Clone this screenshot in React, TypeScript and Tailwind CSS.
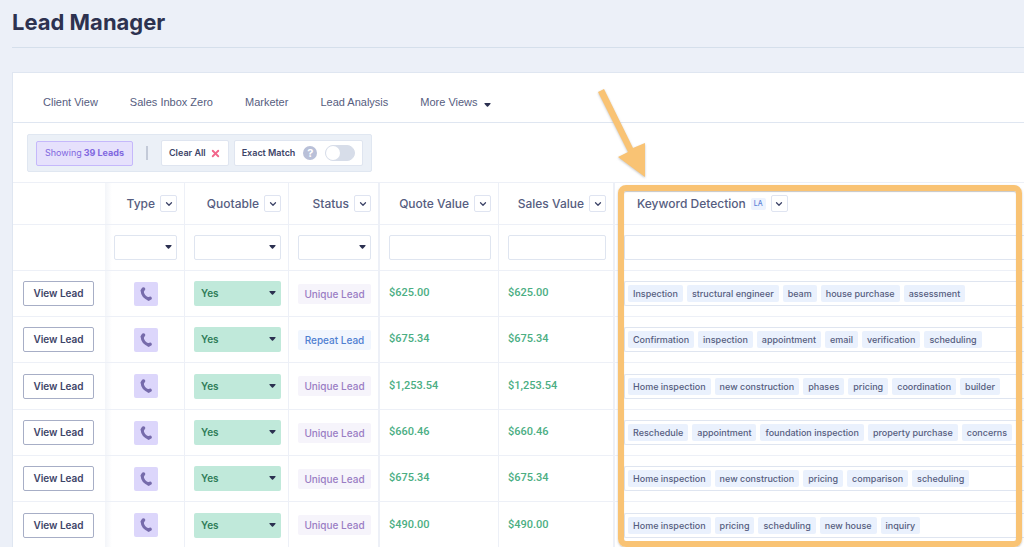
import { useState } from "react";
import { ChevronDown, X } from "lucide-react";

type Lead = {
  status: "Unique Lead" | "Repeat Lead";
  value: string;
  keywords: string[];
};

const views = ["Client View", "Sales Inbox Zero", "Marketer", "Lead Analysis"];

const fade = "bg-[linear-gradient(to_right,#f3f5f9,#fff_7px)]";

const columns = [
  { name: "Type", style: `w-[80px] border-r ${fade}`, select: true },
  { name: "Quotable", style: "w-[104px] border-r", select: true },
  { name: "Status", style: "w-[91px] border-r-2", select: true },
  { name: "Quote Value", style: "w-[119px] border-r", select: false },
  { name: "Sales Value", style: "w-[116px] border-r-2", select: false },
];

const leads: Lead[] = [
  { status: "Unique Lead", value: "$625.00", keywords: ["Inspection", "structural engineer", "beam", "house purchase", "assessment"] },
  { status: "Repeat Lead", value: "$675.34", keywords: ["Confirmation", "inspection", "appointment", "email", "verification", "scheduling"] },
  { status: "Unique Lead", value: "$1,253.54", keywords: ["Home inspection", "new construction", "phases", "pricing", "coordination", "builder"] },
  { status: "Unique Lead", value: "$660.46", keywords: ["Reschedule", "appointment", "foundation inspection", "property purchase", "concerns"] },
  { status: "Unique Lead", value: "$675.34", keywords: ["Home inspection", "new construction", "pricing", "comparison", "scheduling"] },
  { status: "Unique Lead", value: "$490.00", keywords: ["Home inspection", "pricing", "scheduling", "new house", "inquiry"] },
];

const line = "border-t border-[#edf0f7]";
const cell = `${line} pr-[7px] pl-[9px]`;

const Caret = ({ className }: { className: string }) => (
  <svg viewBox="0 0 7 4" className={`h-1 w-[7px] ${className}`} fill="#2b3050">
    <path d="M0.9 0 H6.1 Q7 0.2 6.4 1 L4.1 3.6 Q3.5 4.1 2.9 3.6 L0.6 1 Q0 0.2 0.9 0 Z" />
  </svg>
);

const SelectCaret = () => <Caret className="pointer-events-none absolute top-[10px] right-[5px]" />;

const SortButton = ({ name }: { name: string }) => (
  <button aria-label={`${name} options`} className="flex size-[17px] shrink-0 items-center justify-center rounded-xs border border-[#dfe4f1]">
    <ChevronDown size={10} strokeWidth={3} className="text-[#3d4468]" />
  </button>
);

const Phone = () => (
  <svg viewBox="0 0 12 14" className="h-[14px] w-3" fill="none" stroke="#766bab" strokeLinecap="round">
    <path d="M2.2 4 Q2.4 9.4 8.6 12" strokeWidth="3" />
    <path d="M2.5 3.4 L3.4 2.1" strokeWidth="3.6" />
    <path d="M8.6 11.9 L10.1 11.2" strokeWidth="3.4" />
  </svg>
);

const App = () => {
  const [exact, setExact] = useState(false);

  return (
    <div className="h-screen overflow-hidden bg-[#ecf0f8] pl-3 font-['Inter',sans-serif] text-[#565d80]">
      <header className="border-b border-[#d5dfeb] pt-1 pb-[7px]">
        <h1 className="text-[22px] leading-9 font-bold text-[#2d3250]">Lead Manager</h1>
      </header>

      <main className="mt-6 border-t border-l border-[#dfe6f1] bg-white">
        <nav className="flex h-[50px] items-center gap-8 border-b border-[#dfe6f1] pt-[10px] pl-[30px] font-['Liberation_Sans',sans-serif] text-[11px]">
          {views.map((view) => (
            <a key={view} href="#">{view}</a>
          ))}
          <button className="flex items-center gap-[6px]">
            More Views
            <Caret className="mt-1" />
          </button>
        </nav>

        <div className="px-[14px] pt-[11px] pb-[10px]">
          <div className="flex h-[38px] w-fit items-center rounded-xs border border-[#e0e7f1] bg-[#ebf0f7] px-2 text-[9px] font-semibold text-[#3d4468]">
            <span className="flex h-[25px] items-center gap-[2px] rounded-xs border border-[#c5b8fb] bg-[#e6e1fc] px-2 font-normal text-[#8168e0]">
              Showing <b className="font-bold">39 Leads</b>
            </span>
            <span className="mx-[13px] h-[14px] w-[2px] bg-[#c3cad8]"></span>
            <button className="flex h-[26px] items-center gap-1 rounded-xs border border-[#dfe5f0] bg-white px-[7px]">
              Clear All
              <X size={11} strokeWidth={4} className="text-[#f2668b]" />
            </button>
            <label className="ml-[5px] flex h-[26px] items-center gap-2 rounded-xs border border-[#dfe5f0] bg-white px-[7px]">
              Exact Match
              <span className="flex size-[14px] items-center justify-center rounded-full bg-[#b9c0d8] text-[11px] font-bold text-white">?</span>
              <input type="checkbox" checked={exact} onChange={() => setExact(!exact)} className="peer sr-only" />
              <span className="flex h-4 w-[30px] rounded-full border border-[#d7dde9] bg-[#d7dde9] peer-checked:justify-end peer-checked:bg-[#8168e0]">
                <span className="size-[14px] rounded-full bg-white"></span>
              </span>
            </label>
          </div>
        </div>

        <div className="relative">
          <table className="w-full table-fixed border-separate border-spacing-0 text-left">
            <thead>
              <tr className="h-[42px] text-[12px] font-medium">
                <th className={`w-[92px] ${line}`}></th>
                {columns.map((col) => (
                  <th key={col.name} className={`${cell} ${col.style} font-medium`}>
                    <div className="flex items-center justify-end gap-[5px] leading-4">
                      {col.name}
                      <SortButton name={col.name} />
                    </div>
                  </th>
                ))}
                <th className={`${line} pl-[22px] font-medium`}>
                  <div className="flex items-center gap-[5px] leading-4">
                    Keyword Detection
                    <span className="rounded-xs bg-[#edf3fe] px-[3px] text-[7px] leading-3 text-[#5b82d6]">LA</span>
                    <SortButton name="Keyword Detection" />
                  </div>
                </th>
              </tr>
              <tr className="h-[46px]">
                <td className={line}></td>
                {columns.map((col) => (
                  <td key={col.name} className={`${cell} ${col.style}`}>
                    {col.select ? (
                      <div className="relative">
                        <select aria-label={`Filter ${col.name}`} className="block h-[25px] w-full appearance-none rounded-xs border border-[#dfe5f0]"></select>
                        <SelectCaret />
                      </div>
                    ) : (
                      <input aria-label={`Filter ${col.name}`} className="block h-[25px] w-full rounded-xs border border-[#dfe5f0]" />
                    )}
                  </td>
                ))}
                <td className={`${line} pl-[9px]`}>
                  <input aria-label="Filter Keyword Detection" className="block h-[25px] w-full rounded-l-xs border border-r-0 border-[#dfe5f0]" />
                </td>
              </tr>
            </thead>
            <tbody>
              {leads.map((lead, i) => (
                <tr key={i} className="h-[46px] text-[10px] font-medium nth-[3n]:h-[47px]">
                  <td className={`${line} px-[10px]`}>
                    <button className="block h-[25px] w-[71px] rounded-xs border border-[#a7aec6] font-semibold text-[#3d4468]">View Lead</button>
                  </td>
                  <td className={`${cell} border-r ${fade}`}>
                    <span role="img" aria-label="Phone call" className="mx-auto flex size-6 items-center justify-center rounded-xs bg-[#dcd6fb]">
                      <Phone />
                    </span>
                  </td>
                  <td className={`${cell} border-r`}>
                    <div className="relative">
                      <select aria-label="Quotable" className="block h-[25px] w-full appearance-none rounded-xs bg-[#c0e9da] px-[7px] font-semibold text-[#2f7d59]">
                        <option>Yes</option>
                        <option>No</option>
                      </select>
                      <SelectCaret />
                    </div>
                  </td>
                  <td className={`${cell} border-r-2`}>
                    <span
                      className={`block rounded-xs text-center leading-5 ${
                        lead.status == "Unique Lead" ? "bg-[#f6f4fb] text-[#9a7dc4]" : "bg-[#f1f6fe] text-[#4f80d1]"
                      }`}
                    >
                      {lead.status}
                    </span>
                  </td>
                  <td className={`${cell} border-r font-['Roboto',sans-serif] text-[11px] text-[#4bae83]`}>{lead.value}</td>
                  <td className={`${cell} border-r-2 font-['Roboto',sans-serif] text-[11px] text-[#4bae83]`}>{lead.value}</td>
                  <td className={`${line} pl-[9px]`}>
                    <div className="flex h-[25px] items-center gap-1 overflow-hidden rounded-l-xs border border-r-0 border-[#dfe5f0] pl-[3px] text-[9px]">
                      {lead.keywords.map((word) => (
                        <span key={word} className="rounded-xs bg-[#eaf1fd] px-[5px] leading-[17px] whitespace-nowrap">{word}</span>
                      ))}
                    </div>
                  </td>
                </tr>
              ))}
            </tbody>
          </table>

          {/* callout around the keyword column */}
          <div className="pointer-events-none absolute top-[3px] right-[2px] bottom-[1px] left-[605px] rounded-lg border-6 border-[#f9c374] shadow-[inset_0_1px_1px_#8b8b8b80,0_1px_2px_#8b8b8b80]"></div>
          <svg viewBox="0 0 50 92" className="pointer-events-none absolute -top-[94px] left-[583px] w-[50px] drop-shadow-[0_1px_1px_#8b8b8b80]" fill="#f9c374">
            <path d="M2 4 L8 1 L37 60 L49 55 L49 89 L22 69 L32 64 Z" />
          </svg>
        </div>
      </main>
    </div>
  );
};

export default App;
